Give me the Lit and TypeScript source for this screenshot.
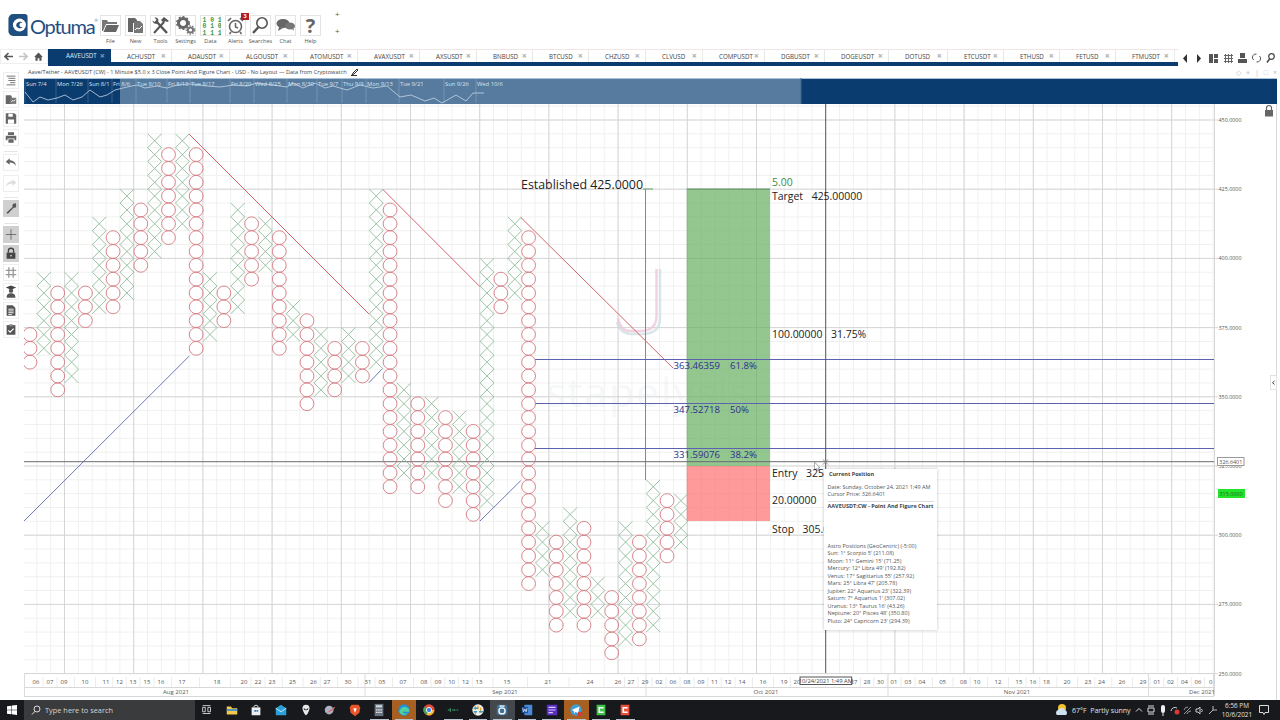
import { LitElement, html, css, svg } from 'lit';
import { customElement } from 'lit/decorators.js';

// tabs: label + width in px
const TABS: [string, number][] = [
  ['AAVEUSDT', 63], ['ACHUSDT', 61], ['ADAUSDT', 58], ['ALGOUSDT', 64], ['ATOMUSDT', 64],
  ['AVAXUSDT', 62], ['AXSUSDT', 57], ['BNBUSD', 56], ['BTCUSD', 56], ['CHZUSD', 57],
  ['CLVUSD', 57], ['COMPUSDT', 62], ['DGBUSDT', 60], ['DOGEUSDT', 64], ['DOTUSD', 59],
  ['ETCUSDT', 56], ['ETHUSD', 56], ['FETUSD', 56], ['FTMUSDT', 59],
];

// point and figure columns: column index, top row, bottom row. even = O, odd = X
const COLS: [number, number, number][] = [
  [0, 15, 17], [1, 11, 16], [2, 12, 19], [3, 11, 18], [4, 12, 14], [5, 7, 13], [6, 8, 13], [7, 5, 12],
  [8, 6, 10], [9, 1, 9], [10, 2, 8], [11, 1, 7], [12, 2, 16], [13, 11, 15], [14, 12, 14], [15, 6, 13],
  [16, 7, 11], [17, 7, 10], [18, 8, 16], [19, 13, 15], [20, 14, 20], [21, 15, 19], [22, 16, 19], [23, 15, 18],
  [24, 16, 18], [25, 5, 17], [26, 6, 26], [27, 19, 25], [28, 20, 26], [29, 20, 25], [30, 21, 27], [31, 21, 26],
  [32, 22, 28], [33, 10, 27], [34, 11, 13], [35, 7, 12], [36, 8, 33], [37, 29, 32], [38, 30, 36], [39, 28, 35],
  [40, 29, 36], [41, 33, 35], [42, 34, 38], [43, 29, 37], [44, 30, 37], [45, 26, 36], [46, 27, 31], [47, 27, 30],
];
const colX = (c: number) => 30 + 13.85 * c;
const rowY = (r: number) => 126.9 + 13.84 * r;

const range = (from: number, to: number, step: number) => {
  const out: number[] = [];
  for (let v = from; v <= to + 0.01; v += step) out.push(v);
  return out;
};

const DAYS: [number, string][] = [
  [36, '06'], [50, '07'], [64, '09'], [85, '10'], [106, '11'], [119.5, '12'], [133, '13'], [147, '15'], [161, '16'],
  [182, '17'], [217, '18'], [244, '20'], [258, '22'], [272, '23'], [292.5, '25'], [313.5, '26'], [327, '27'],
  [348, '30'], [368, '31'], [382, '05'], [403, '07'], [424, '08'], [438, '09'], [451.6, '10'], [465.5, '12'],
  [479, '13'], [507, '15'], [548, '21'], [590, '24'], [618, '26'], [631, '27'], [645, '29'], [659, '02'],
  [673, '06'], [687, '08'], [701, '09'], [714.5, '11'], [728, '12'], [742, '14'], [763, '16'], [784, '19'],
  [797, '20'], [854, '27'], [867, '28'], [880.5, '30'], [894, '01'], [908, '03'], [922, '04'], [942.6, '05'],
  [963.5, '08'], [977, '10'], [998, '12'], [1019, '15'], [1033, '16'], [1046.5, '18'], [1067, '20'], [1088, '23'],
  [1101.5, '24'], [1122, '26'], [1143, '29'], [1157, '01'], [1170.6, '02'], [1184.5, '04'], [1198, '06'], [1210.6, '0'],
];
const MONTHS: [number, string][] = [[176, 'Aug 2021'], [505, 'Sep 2021'], [766, 'Oct 2021'], [1017, 'Nov 2021'], [1202, 'Dec 2021']];
const MONTH_SEPS = [24.5, 365, 646, 888, 1148.5, 1213.5];
const PRICES = ['450.0000', '425.0000', '400.0000', '375.0000', '350.0000', '325.0000', '300.0000', '275.0000', '250.0000'];

const NAV_LABELS: [number, string][] = [
  [26, 'Sun 7/4'], [57, 'Mon 7/26'], [89, 'Sun 8/1'], [113, 'Fri 8/6'], [137, 'Tue 8/10'], [168, 'Fri 8/13'],
  [191, 'Tue 8/17'], [231, 'Fri 8/20'], [255, 'Wed 8/25'], [288, 'Mon 8/30'], [318, 'Tue 9/7'], [343, 'Thu 9/9'],
  [367, 'Mon 9/13'], [400, 'Tue 9/21'], [445, 'Sun 9/26'], [477, 'Wed 10/6'],
];
const NAV_LINE = '25,92 33,102 40,97 48,100 57,98 65,95 73,100 82,97 90,90 100,97 107,95 115,90 127,87 137,85 145,88 157,86 167,88 177,85 190,84 207,86 220,87 233,85 247,86 257,83 273,85 287,87 293,83 303,88 315,83 325,88 333,86 347,90 360,85 373,88 387,86 400,97 411,95 425,101 434,98 442,103 456,95 466,101 473,93 484,93';

const ASTRO = [
  'Astro Positions (GeoCentric) (-5:00)', 'Sun: 1° Scorpio 5\' (211.08)', 'Moon: 11° Gemini 15\' (71.25)',
  'Mercury: 12° Libra 49\' (192.82)', 'Venus: 17° Sagittarius 55\' (257.92)', 'Mars: 25° Libra 47\' (205.78)',
  'Jupiter: 22° Aquarius 23\' (322.39)', 'Saturn: 7° Aquarius 1\' (307.02)', 'Uranus: 13° Taurus 16\' (43.26)',
  'Neptune: 20° Pisces 48\' (350.80)', 'Pluto: 24° Capricorn 23\' (294.39)',
];

const TOOLBAR: [string, unknown][] = [
  ['File', svg`<path d="M2 5h5l1 2h9v2H6L3 16H2z" fill="#777"/><path d="M6.5 10H19l-3 7H3.5z" fill="#666"/>`],
  ['New', svg`<path d="M3 3h7l2 2v3H8v9H3z" fill="#666"/><path d="M9 6h6l3 3v9H9z" fill="#777"/><path d="M10 15l2-2 2 1 3-3" stroke="#fff" fill="none"/>`],
  ['Tools', svg`<path d="M6 6l11 12" stroke="#555" stroke-width="2.4"/><path d="M2.5 5.500a3.500 3.500 0 0 0 5 3l1-3a3.500 3.500 0 0 0-4-3l2 2.500-2 2z" fill="#555"/><path d="M4 18L14 7" stroke="#555" stroke-width="2"/><path d="M11 5l3-3 5 4-2 1-2-1-1 2z" fill="#555"/>`],
  ['Settings', svg`<circle cx="8" cy="8" r="4.5" fill="none" stroke="#666" stroke-width="3"/><circle cx="8" cy="8" r="6.2" fill="none" stroke="#666" stroke-width="1.5" stroke-dasharray="2 2"/><circle cx="15.5" cy="15" r="2.6" fill="none" stroke="#777" stroke-width="2"/><circle cx="15.5" cy="15" r="4.2" fill="none" stroke="#777" stroke-width="1.2" stroke-dasharray="1.5 1.5"/>`],
  ['Data', svg`<g font-family="Liberation Mono, monospace" font-size="6.4" font-weight="700" fill="#3c9a4c"><text x="2.5" y="6.5">1 0 1</text><text x="2.5" y="13">0 1 0</text><text x="2.5" y="19.5">1 1 1</text></g>`],
  ['Alerts', svg`<circle cx="10.5" cy="11.5" r="6" fill="none" stroke="#666" stroke-width="1.6"/><path d="M10.5 8v4l2.5 1M3 6l3-3M18 6l-3-3M6 17l-1.5 2M15 17l1.5 2" stroke="#666" stroke-width="1.6" fill="none"/>`],
  ['Searches', svg`<circle cx="12" cy="8" r="5.2" fill="none" stroke="#555" stroke-width="1.6"/><path d="M8.5 12L3 18" stroke="#555" stroke-width="2.4"/>`],
  ['Chat', svg`<ellipse cx="8" cy="8.5" rx="6.5" ry="4.5" fill="#666"/><path d="M4 12l-1 4 5-3z" fill="#666"/><ellipse cx="15" cy="11" rx="5" ry="3.6" fill="#777"/><path d="M17 14l2 2-1-4z" fill="#777"/>`],
  ['Help', null],
];

const SIDE_ICONS = [
  svg`<path d="M3 3h10M5 5.5h8M5 8h8M7 10.5h6M3 13h10" stroke="#666" fill="none"/>`,
  svg`<path d="M2 3h6l1 2v8H2z" fill="#666"/><path d="M7 6h7v7H7z" fill="#777"/><path d="M8 11l2-2 1 1 2-2" stroke="#fff" fill="none"/>`,
  svg`<path d="M2 2h10l2 2v10H2z" fill="#666"/><path d="M5 2.500h5V6H5zM4.500 9h7v5h-7z" fill="#fff"/>`,
  svg`<path d="M4.500 2h7v3h-7zM2 6h12v5h-2V9H4v2H2zM5 10h6v4H5z" fill="#666"/>`,
  svg`<path d="M6.500 3L2 7l4.500 3.500V8c3 0 5.500 1 7 4 0-4-3-6.500-7-6.500z" fill="#666"/>`,
  svg`<path d="M9.500 3L14 7l-4.500 3.500V8c-3 0-5.500 1-7 4 0-4 3-6.500 7-6.500z" fill="#ddd"/>`,
  svg`<path d="M13.500 2l-3 .5-1 2 .5 1.500L3 12.500 3.500 14 5 13.500l6-6.500 2 0 1-2z" fill="#555"/>`,
  svg`<path d="M8 2v12M2 8h12" stroke="#666" fill="none"/>`,
  svg`<path d="M5 7V5a3 3 0 0 1 6 0v2" stroke="#444" stroke-width="1.5" fill="none"/><path d="M3 7h10v7H3z" fill="#444"/><circle cx="8" cy="10.500" r="1" fill="#ccc"/>`,
  svg`<path d="M5.500 2v12M10.500 2v12M2 5.500h12M2 10.500h12" stroke="#999" stroke-width="1.500" fill="none"/>`,
  svg`<path d="M8 1L2 3.500 8 6l6-2.500z" fill="#444"/><circle cx="8" cy="7" r="2.500" fill="#555"/><path d="M3 15c0-4 2-5 5-5s5 1 5 5z" fill="#555"/>`,
  svg`<path d="M3 2h7l3 3v9H3z" fill="#555"/><path d="M5 6.500h6M5 8.500h6M5 10.500h6M5 12.500h4" stroke="#fff" fill="none"/>`,
  svg`<path d="M3 3h10v11H3z" fill="#555"/><path d="M6 2h4v2.500H6z" fill="#888"/><path d="M5 9l2 2 4-4" stroke="#fff" stroke-width="1.300" fill="none"/>`,
];

// taskbar icons, left to right; second value is the state class
const TASK_ICONS: [unknown, string][] = [
  [svg`<path d="M3 3h9M3 12h9M3 5h3v5H3zM9 5h3v5H9z" stroke="#ddd" fill="none"/>`, ''],
  [svg`<path d="M2 4h5l1 2h6v7H2z" fill="#f5c84c"/><path d="M2 7h12v2H2z" fill="#3b8dd0"/>`, ''],
  [svg`<path d="M3 5h10v9H3z" fill="#eee"/><path d="M5.500 5a2.500 2.500 0 0 1 5 0" stroke="#eee" fill="none"/><path d="M6 8h2v2H6zM8.500 8h2v2h-2z" fill="#2a7fd0"/>`, ''],
  [svg`<path d="M2 6l6-4 6 4v8H2z" fill="#2a9fd8"/><path d="M2 6l6 4 6-4" stroke="#cfefff" fill="none"/>`, ''],
  [svg`<path d="M8 2c3 0 4 2 4 4 0 3-3 8-4 8s-4-5-4-8c0-2 1-4 4-4z" fill="#e8e8e8"/><path d="M5.500 6.500l2 1.500M10.500 6.500l-2 1.500" stroke="#222" stroke-width="1.200"/>`, ''],
  [svg`<circle cx="7" cy="8" r="5" fill="#aab3c4"/><path d="M3 12l9-7 2-1-2 4z" fill="#d86a6a"/>`, ''],
  [svg`<path d="M4 2h8l2 3-1 6-5 4-5-4-1-6z" fill="#e8552a"/><path d="M6 6h4l-2 5z" fill="#fff"/>`, ''],
  [svg`<path d="M3 1h10v14H3z" fill="#6a7480"/><path d="M4.500 2.500h7V5h-7z" fill="#c8d8e0"/><path d="M4.500 7h2v1.500h-2zM7 7h2v1.500H7zM9.500 7h2v1.500h-2zM4.500 10h2v1.500h-2zM7 10h2v1.500H7zM9.500 10h2v1.500h-2z" fill="#ddd"/>`, 'run'],
  [svg`<circle cx="8" cy="8" r="6.500" fill="#1f8fd8"/><path d="M2.500 10c1-5 6-7 9-5 2 1 3 3 2.500 5H6.500c.5 2 3.500 2.500 6 1.500-2 3-8 3-10-1.500z" fill="#4fd0a0"/>`, 'hot'],
  [svg`<circle cx="8" cy="8" r="6.500" fill="#e04a3a"/><path d="M8 8h6a6.500 6.500 0 0 1-9 5.500z" fill="#f2c230"/><path d="M8 8L5 13.500A6.500 6.500 0 0 1 2.500 4.500z" fill="#3aa857"/><circle cx="8" cy="8" r="3" fill="#3b80e8" stroke="#fff"/>`, ''],
  [svg`<path d="M2 8h2M5 6v4M7 8h2M10 7v2M12 8h2" stroke="#3ea06a" stroke-width="1.200"/>`, 'run'],
  [svg`<circle cx="8" cy="8" r="6.500" fill="#f0f0f0"/><path d="M5 3v5M8 3v4M11 5v6M5 13V9" stroke="#e0a030" stroke-width="1.600"/><path d="M3 6h5M3 10h4M9 10h5" stroke="#3aa0c0" stroke-width="1.600"/>`, 'run'],
  [svg`<path d="M4 2h8a2 2 0 0 1 2 2v8a2 2 0 0 1-2 2H4a2 2 0 0 1-2-2V4a2 2 0 0 1 2-2z" fill="#3f6f96"/><circle cx="8" cy="9" r="3.500" fill="none" stroke="#fff" stroke-width="1.500"/><path d="M5 3.500h6" stroke="#fff" stroke-width="1.500"/>`, 'cur'],
  [svg`<path d="M5 2h9v12H5z" fill="#4a8ad8"/><path d="M2 4.500h7v7H2z" fill="#1c4f9c"/><path d="M3 6l1 4 1.500-3 1.500 3 1-4" stroke="#fff" stroke-width=".8" fill="none"/>`, 'run'],
  [svg`<path d="M2 2h12v12H2z" fill="#5a2fc0"/><path d="M4 5h8M4 8h8M4 11h5" stroke="#d8c8ff" stroke-width="1.200"/>`, 'run'],
  [svg`<circle cx="8" cy="8" r="6.500" fill="#3aa0d8"/><path d="M3 8l9-4-1.500 8-3-2-1.500 2-.5-3z" fill="#fff"/><circle cx="12" cy="12.500" r="2.500" fill="#d83a3a"/>`, 'hot'],
  [svg`<path d="M3 2h10v12H3z" fill="#3fc34a"/><path d="M11 5.500H6v5h5" stroke="#fff" stroke-width="1.800" fill="none"/>`, 'run'],
  [svg`<path d="M3 2h10v12H3z" fill="#e8503a"/><path d="M11 5.500H6v5h5" stroke="#fff" stroke-width="1.800" fill="none"/>`, 'run'],
];

@customElement('app-root')
export class AppRoot extends LitElement {
  static styles = css`
    :host {
      display: flex;
      flex-direction: column;
      width: 1280px;
      height: 720px;
      overflow: hidden;
      background: #fff;
      font-family: 'Open Sans', 'Noto Sans', sans-serif;
      color: #444;
    }
    svg { display: block; flex: none; }

    /* top toolbar */
    .top { height: 49px; display: flex; flex: none; align-items: flex-start; }
    .logo { width: 100px; height: 49px; padding: 13.5px 0 0 8px; box-sizing: border-box; display: flex; align-items: flex-start; }
    .logo-text { font-family: Lato, 'Open Sans', sans-serif; font-size: 20px; line-height: 24px; color: #1f4f7f; letter-spacing: -1.2px; margin-left: 2px; white-space: nowrap; }
    .logo-text sup { font-size: 4px; vertical-align: top; line-height: 14px; letter-spacing: 0; }
    .tools { display: flex; gap: 4px; padding-top: 15px; }
    .tool { width: 21px; display: flex; flex-direction: column; align-items: center; position: relative; }
    .tool-box { width: 21px; height: 21px; box-sizing: border-box; border: 1px solid #e4e4e4; display: flex; align-items: center; justify-content: center; }
    .qm { font-size: 20px; font-weight: 700; line-height: 19px; color: #666; }
    .tool-label { font-size: 5.6px; line-height: 8px; margin-top: 1px; white-space: nowrap; color: #555; }
    .badge { position: absolute; left: 16px; top: -2px; width: 8px; height: 7px; background: #b01e28; color: #fff; font-size: 5.5px; font-weight: 700; line-height: 7px; text-align: center; }
    .plus { margin: 10px 0 0 14px; display: flex; flex-direction: column; gap: 9px; font-size: 8px; line-height: 8px; color: #555; }

    /* tab strip */
    .tabrow { height: 17px; flex: none; display: flex; }
    .navbtns { width: 48px; height: 15px; display: flex; border: 1px solid #eee; box-sizing: border-box; }
    .navbtn { width: 15px; display: flex; align-items: center; justify-content: center; }
    .tabs { display: flex; width: 1130px; height: 17px; flex: none; box-sizing: border-box; border-bottom: 4px solid #0b3c70; border-top: 1px solid #f1e6e6; }
    .tab { box-sizing: border-box; height: 12px; display: flex; align-items: center; justify-content: space-between; padding: 0 5px 0 16px; font-size: 6.2px; color: #444; border-right: 1px solid #e8e8e8; white-space: nowrap; }
    .tab b { font-weight: 700; color: #aaa; font-size: 9px; line-height: 10px; }
    .tab.active { background: #0b3c70; color: #dfe8f2; border: none; margin-top: -1px; height: 13px; padding: 0 6px 0 18px; }
    .tab.active b { color: #7f9cba; }
    .tabctl { display: flex; padding-top: 1px; height: 16px; }
    .tabctl span { width: 14.3px; display: flex; justify-content: center; align-items: center; }

    /* body */
    .body { flex: 1; display: flex; min-height: 0; }
    .side { width: 24px; flex: none; box-sizing: border-box; padding: 5.5px 2px 0 0; display: flex; flex-direction: column; align-items: center; gap: 2px; }
    .sbtn { width: 16px; height: 17px; box-sizing: border-box; border: 1px solid #eee; display: flex; align-items: center; justify-content: center; flex: none; }
    .sbtn.on { background: #d0d0d0; border-color: #d0d0d0; }
    .sbtn.down { margin-top: 2px; }
    .sep { height: 4px; width: 14px; flex: none; box-sizing: border-box; border-bottom: 1px solid #e6e6e6; }
    .sep.wide { height: 5px; }
    .main { flex: 1; min-width: 0; display: flex; flex-direction: column; }
    .title { height: 12px; flex: none; display: flex; align-items: center; padding-left: 4px; font-size: 5.58px; color: #444; white-space: nowrap; gap: 4px; }
    .winctl { margin-left: auto; display: flex; gap: 5px; padding-right: 3px; font-size: 7px; color: #bbb; }
    .chart-wrap { position: relative; flex: 1; min-height: 0; }

    /* tooltip over chart */
    .tip { position: absolute; left: 800px; top: 365px; width: 113px; height: 161px; box-sizing: border-box; padding: 2px 3.5px; background: #fff; box-shadow: 0 0 3px rgba(0,0,0,.25); font-size: 5.5px; line-height: 7.53px; color: #555; white-space: nowrap; }
    .tip strong { display: block; font-weight: 700; color: #444; }
    .tip hr { border: none; border-top: 1px solid #ddd; margin: 2px 0 1.5px; }
    .tip .gap { margin-top: 5px; }
    .tip .astro { margin-top: 32px; }

    /* windows taskbar */
    .taskbar { height: 20px; flex: none; display: flex; background: #17191c; color: #e2e2e2; align-items: stretch; }
    .start { width: 24px; display: flex; align-items: center; justify-content: center; }
    .search { width: 171px; background: #3a3b3d; display: flex; align-items: center; gap: 4px; padding-left: 7px; box-sizing: border-box; font-size: 7.4px; color: #d4d4d4; }
    .task { width: 24.6px; display: flex; align-items: center; justify-content: center; box-sizing: border-box; position: relative; flex: none; }
    .task.hot { background: #a85f22; }
    .task.cur { background: #44474b; }
    .task.run::after, .task.hot::after, .task.cur::after { content: ''; position: absolute; left: 3px; right: 3px; bottom: 0; height: 1px; background: #b8c4d0; }
    .tray { margin-left: auto; display: flex; align-items: center; font-size: 7px; }
    .weather { margin-right: 4px; }
    .wtext { width: 61px; white-space: nowrap; }
    .ticon { width: 12px; display: flex; justify-content: center; }
    .ticon.net { margin-left: 2px; }
    .clock { width: 34px; margin-left: 1px; text-align: center; font-size: 6.4px; line-height: 9px; white-space: nowrap; }
    .notify { width: 20px; margin-right: 6px; display: flex; justify-content: center; }
  `;

  private renderGrid() {
    const minorX = range(24 + ((64.5 - 24) % 13.84), 1214, 13.84);
    const minorY = range(104 + ((120 - 104) % 13.84), 673, 13.84);
    const majorX = range(64.5, 1214, 69.2);
    const majorY = range(120, 674, 69.2);
    return svg`
      <path d=${minorX.map(x => `M${x} 104V673`).join('')} stroke="#eff1ef" fill="none"/>
      <path d=${minorY.map(y => `M24 ${y}H1214`).join('')} stroke="#eff1ef" fill="none"/>
      <path d=${majorX.filter(x => Math.abs(x - 825.7) > 1).map(x => `M${x} 104V673`).join('')} stroke="#d6d6d8" fill="none"/>
      <path d=${majorY.map(y => `M24 ${y}H1218`).join('')} stroke="#d6d6d8" fill="none"/>
      <path d="M1214.5 104V696M1276.5 104V700" stroke="#d8d8d8" fill="none"/>
    `;
  }

  private renderPnf() {
    let xs = '';
    const circles: unknown[] = [];
    const s = 6.92;
    for (const [c, top, bot] of COLS) {
      const cx = colX(c);
      for (let r = top; r <= bot; r++) {
        const cy = rowY(r);
        if (c % 2) xs += `M${cx - s} ${cy - s}L${cx + s} ${cy + s}M${cx + s} ${cy - s}L${cx - s} ${cy + s}`;
        else circles.push(svg`<circle cx=${cx} cy=${cy} r="6.9"/>`);
      }
    }
    return svg`
      <path d=${xs} stroke="#8fbb9b" stroke-width=".9" fill="none"/>
      <g stroke="#d67c83" stroke-width=".9" fill="none">${circles}</g>
    `;
  }

  private renderLevels() {
    return svg`
      <!-- watermark -->
      <text x="546" y="407" font-size="41" letter-spacing="2" fill="#e6ebef" opacity=".35">stapelysis</text>
      <path d="M660 269V318Q660 334 642 334H632Q620 334 617 322" stroke="#c9dde0" stroke-width="2.5" fill="none" opacity=".7"/>
      <path d="M656.5 269V316Q656.5 331 640 331H630Q620 331 618 318" stroke="#efc8dc" stroke-width="2.5" fill="none" opacity=".8"/>

      <rect x="686.7" y="189" width="83.3" height="277" fill="#60ad5a" opacity=".68"/>
      <rect x="686.7" y="466" width="83.3" height="55" fill="#ff6a6a" opacity=".68"/>
      <path d="M686.7 189H770" stroke="#5d8a5d" fill="none"/>

      <path d="M189 134L369 314M382.7 189.3L480 286.7M520.7 217.3L673 368" stroke="#d0666c" fill="none"/>
      <path d="M189.3 356L24 521M369 382.7L381.7 369.3M480 521L520.7 480.7" stroke="#6c78b8" fill="none"/>

      <path d="M645.5 189V480M643 189H653" stroke="#68a06c" fill="none"/>
      <path d="M535 359.5H1214M535 403.5H1214M535 448.5H1214" stroke="#5c62b0" fill="none"/>
      <path d="M24 461.7H1214" stroke="#6a6a70" fill="none"/>
      <path d="M825.7 104V673" stroke="#55555c" fill="none"/>
      <path d="M823 459.5L828 464.5M828 459.5L823 464.5" stroke="#888" fill="none"/>
      <path d="M814.5 462V470L816.5 468.3 818 471 819 470.5 818 468H820z" fill="#fff" stroke="#888" stroke-width=".7"/>

      <g font-size="10.45" fill="#222">
        <text x="521" y="189" font-size="12.4">Established 425.0000</text>
        <text x="772" y="186" fill="#3f8a3f">5.00</text>
        <text x="772" y="200">Target</text><text x="811.7" y="200">425.00000</text>
        <text x="772" y="338">100.00000</text><text x="831" y="338">31.75%</text>
        <text x="772" y="476.7">Entry</text><text x="806" y="476.7">325.00000</text>
        <text x="772" y="504">20.00000</text>
        <text x="772" y="532.5">Stop</text><text x="802.5" y="532.5">305.00000</text>
      </g>
      <g font-size="9.6" fill="#2e2e90">
        <text x="673.5" y="369.3">363.46359</text><text x="730" y="369.3">61.8%</text>
        <text x="673.5" y="413.3">347.52718</text><text x="730" y="413.3">50%</text>
        <text x="673.5" y="457.5">331.59076</text><text x="730" y="457.5">38.2%</text>
      </g>
    `;
  }

  private renderAxes() {
    const seps = DAYS.slice(0, -1).map(([x], i) => (x + DAYS[i + 1][0]) / 2);
    return svg`
      <path d="M24 673.5H1214M24 687.5H1214M24 696.5H1214" stroke="#d8d8d8" fill="none"/>
      <path d=${seps.map(x => `M${x} 677V687`).join('')} stroke="#ececec" fill="none"/>
      <path d=${MONTH_SEPS.map(x => `M${x} 673V696`).join('')} stroke="#dcdcdc" fill="none"/>
      <g font-size="6" fill="#555" text-anchor="middle">
        ${DAYS.map(([x, t]) => svg`<text x=${x} y="684.2">${t}</text>`)}
        ${MONTHS.map(([x, t]) => svg`<text x=${x} y="693.8">${t}</text>`)}
      </g>
      <g font-size="5.4" fill="#555">
        ${PRICES.map((t, i) => svg`<text x="1218.5" y=${122 + 69.2 * i}>${t}</text>`)}
      </g>
      <rect x="1217.5" y="457.5" width="26.5" height="8" fill="#fff" stroke="#999"/>
      <text x="1219.3" y="463.7" font-size="5.4" fill="#555">326.6401</text>
      <rect x="1218" y="489" width="27" height="9" fill="#24e32c"/>
      <text x="1219.5" y="495.7" font-size="5.4" fill="#1c6a1c">315.0000</text>
      <rect x="800" y="677" width="51.7" height="7.5" fill="#fff" stroke="#555"/>
      <text x="825.8" y="683" font-size="5.8" fill="#444" text-anchor="middle">10/24/2021 1:49 AM</text>
      <!-- lock and side collapse -->
      <path d="M1266.5 110V108a2.5 2.5 0 0 1 5 0v2" stroke="#666" stroke-width="1.2" fill="none"/>
      <path d="M1265 110h8v6.500h-8z" fill="#666"/>
      <rect x="1270.5" y="375.5" width="6" height="14" fill="#fff" stroke="#e2e2e2"/>
      <path d="M1274.5 381l-2 1.700 2 1.700" stroke="#444" fill="none"/>
    `;
  }

  render() {
    return html`
      <div class="top">
        <div class="logo">
          <svg width="20" height="22" viewBox="0 0 20 23">
            <path d="M5 0h12a3 3 0 0 1 3 3v20H5a5 5 0 0 1-5-5V5a5 5 0 0 1 5-5z" fill="#1f4f7f"/>
            <circle cx="11.5" cy="11.5" r="6.8" fill="#fff"/>
            <path d="M8 12a4 4 0 0 1 7-2.500c-1-.5-3-.5-3.500 1.500s2 3.500 3.500 2.500a4 4 0 0 1-7-1.500z" fill="#1f4f7f"/>
          </svg>
          <div class="logo-text">Optuma<sup>®</sup></div>
        </div>
        <div class="tools">
          ${TOOLBAR.map(([label, icon]) => html`
            <div class="tool">
              <div class="tool-box">
                ${icon ? html`<svg width="21" height="21" viewBox="0 0 21 21">${icon}</svg>` : html`<span class="qm">?</span>`}
              </div>
              <div class="tool-label">${label}</div>
              ${label === 'Alerts' ? html`<div class="badge">3</div>` : ''}
            </div>`)}
        </div>
        <div class="plus"><span>+</span><span>+</span></div>
      </div>

      <div class="tabrow">
        <div class="navbtns">
          <div class="navbtn"><svg width="9" height="9" viewBox="0 0 9 9"><path d="M4.500 1L1 4.500 4.500 8M1 4.500h8" stroke="#555" stroke-width="1.600" fill="none"/></svg></div>
          <div class="navbtn"><svg width="9" height="9" viewBox="0 0 9 9"><path d="M4.500 1L8 4.500 4.500 8M8 4.500H0" stroke="#c4c4c4" stroke-width="1.600" fill="none"/></svg></div>
          <div class="navbtn"><svg width="13" height="13" viewBox="0 0 15 13"><path d="M7.500 2L2.500 7H4v4.500h2.500v-3h2v3H11V7h1.500z" fill="#555"/></svg></div>
        </div>
        <div class="tabs">
          ${TABS.map(([t, w], i) => html`
            <div class="tab ${i === 0 ? 'active' : ''}" style="width:${w}px">${t}<b>×</b></div>`)}
        </div>
        <div class="tabctl">
          <span><svg width="6" height="9" viewBox="0 0 6 9"><path d="M5 0L1 4.500 5 9z" fill="#333"/></svg></span>
          <span><svg width="6" height="9" viewBox="0 0 6 9"><path d="M1 0l4 4.500L1 9z" fill="#333"/></svg></span>
          <span><svg width="9" height="9" viewBox="0 0 9 9"><path d="M0 0h4v9H0zM5 0h4v4H5zM5 5h4v4H5z" fill="#555"/></svg></span>
          <span><svg width="9" height="9" viewBox="0 0 9 9"><path d="M0 1.500h9M0 4.500h9M0 7.500h9M1.500 0v9M4.500 0v9M7.500 0v9" stroke="#666" fill="none"/></svg></span>
          <span><svg width="9" height="10" viewBox="0 0 9 10"><path d="M2 0h5v5H2zM0 6h9v4H0z" fill="#555"/></svg></span>
          <span><svg width="9" height="10" viewBox="0 0 9 10"><path d="M1.500 7a3.500 3.500 0 0 1 3-6M7.500 3a3.500 3.500 0 0 1-3 6" stroke="#555" fill="none"/></svg></span>
          <span><svg width="9" height="10" viewBox="0 0 9 10"><circle cx="5.500" cy="3.500" r="2.800" fill="none" stroke="#444" stroke-width="1.200"/><path d="M3.500 6L1 9.500" stroke="#444" stroke-width="1.500"/></svg></span>
        </div>
      </div>

      <div class="body">
        <div class="side">
          ${SIDE_ICONS.map((icon, i) => html`
            ${i === 4 || i === 6 ? html`<div class="sep"></div>` : ''}
            ${i === 7 ? html`<div class="sep wide"></div>` : ''}
            <div class="sbtn ${i >= 6 && i <= 8 ? 'on' : ''} ${i === 5 ? 'down' : ''}"><svg width="14" height="15" viewBox="0 0 16 16">${icon}</svg></div>`)}
        </div>
        <div class="main">
          <div class="title">
            <span>Aave/Tether - AAVEUSDT (CW) - 1 Minute $5.0 x 3 Close Point And Figure Chart - USD - No Layout — Data from Cryptowatch</span>
            <svg width="8" height="8" viewBox="0 0 8 8"><path d="M1 7l1-2 4-4 1 1-4 4zM0 7.500h6" stroke="#333" fill="none"/></svg>
            <div class="winctl"><span>◇</span><span>⌖</span><span>|</span><span>□</span><span>×</span></div>
          </div>
          <svg width="1253" height="26" viewBox="24 78 1253 26" font-family="Open Sans, sans-serif">
            <rect x="24" y="78" width="1253" height="26" fill="#0b3c70"/>
            <rect x="120" y="78" width="681" height="26" fill="#567b9f"/>
            <path d="M24 78.500H1277" stroke="#a9c0d6" fill="none"/>
            <path d="M801 78V104" stroke="#3f668c" fill="none"/>
            <path d=${NAV_LABELS.map(([x]) => `M${x - 1} 79V103`).join('')} stroke="#fff" opacity=".18" fill="none"/>
            <polyline points=${NAV_LINE} stroke="#c6d5e4" fill="none" stroke-width=".8"/>
            <g font-size="5.8" fill="#d8e3ee">
              ${NAV_LABELS.map(([x, t]) => svg`<text x=${x} y="85.500">${t}</text>`)}
            </g>
          </svg>
          <div class="chart-wrap">
            <svg width="1256" height="596" viewBox="24 104 1256 596" font-family="Open Sans, sans-serif">
              ${this.renderGrid()}
              ${this.renderLevels()}
              ${this.renderPnf()}
              ${this.renderAxes()}
            </svg>
            <div class="tip">
              <strong>&nbsp;Current Position</strong>
              <div class="gap">Date: Sunday, October 24, 2021 1:49 AM</div>
              <div>Cursor Price: 326.6401</div>
              <hr />
              <strong>AAVEUSDT:CW - Point And Figure Chart</strong>
              <div class="astro">${ASTRO.map(l => html`<div>${l}</div>`)}</div>
            </div>
          </div>
        </div>
      </div>

      <div class="taskbar">
        <div class="start"><svg width="10" height="10" viewBox="0 0 10 10"><path d="M0 1.300L4.500.700V4.700H0zM5 .600L10 0V4.700H5zM0 5.200H4.500V9.300L0 8.700zM5 5.200H10V10L5 9.300z" fill="#fff"/></svg></div>
        <div class="search">
          <svg width="10" height="10" viewBox="0 0 10 10"><circle cx="6" cy="4" r="3" fill="none" stroke="#ddd"/><path d="M4 6.300L1 9.500" stroke="#ddd"/></svg>
          Type here to search
        </div>
        ${TASK_ICONS.map(([icon, mod]) => html`
          <div class="task ${mod}"><svg width="14" height="14" viewBox="0 0 16 16">${icon}</svg></div>`)}
        <div class="tray">
          <div class="weather"><svg width="12" height="14" viewBox="0 0 12 14"><circle cx="6" cy="5" r="4" fill="#f2c230"/><path d="M1 12a3 3 0 0 1 1-5 4 4 0 0 1 7 0 3 3 0 0 1 1 5z" fill="#cfe0ee"/></svg></div>
          <div class="wtext">67°F&nbsp; Partly sunny</div>
          <div class="ticon"><svg width="8" height="8" viewBox="0 0 8 8"><path d="M1 5.500L4 2.500 7 5.500" stroke="#ddd" fill="none"/></svg></div>
          <div class="ticon"><svg width="8" height="10" viewBox="0 0 8 10"><path d="M1 1h6M1 9h6M1 3h6v4H1z" stroke="#ddd" fill="none"/></svg></div>
          <div class="ticon"><svg width="6" height="11" viewBox="0 0 6 11"><rect x="1" y="0" width="4" height="8" rx="2" fill="#eee"/><path d="M3 8v3" stroke="#eee"/></svg></div>
          <div class="ticon"><svg width="10" height="10" viewBox="0 0 10 10"><path d="M1 6a4 4 0 0 1 6-3" stroke="#ccc" fill="none"/><circle cx="7" cy="7" r="2.500" fill="#d83a3a"/></svg></div>
          <div class="ticon"><svg width="9" height="9" viewBox="0 0 9 9"><path d="M1 8L8 1M1 4a4 4 0 0 1 4-3M4 8a4 4 0 0 1 4-3" stroke="#999" fill="none"/></svg></div>
          <div class="ticon"><svg width="9" height="9" viewBox="0 0 9 9"><path d="M1 3h2l2-2v7L3 6H1zM6.500 3a2 2 0 0 1 0 3" stroke="#ccc" fill="none"/></svg></div>
          <div class="ticon net"><svg width="10" height="10" viewBox="0 0 10 10"><path d="M1 9L5 5M5 1v4h4" stroke="#bbb" fill="none"/></svg></div>
          <div class="clock">6:56 PM<br />10/6/2021</div>
          <div class="notify"><svg width="10" height="10" viewBox="0 0 10 10"><path d="M.5.500h9v7H6l-1 2-1-2H.5z" stroke="#ddd" fill="none"/></svg></div>
        </div>
      </div>
    `;
  }
}
